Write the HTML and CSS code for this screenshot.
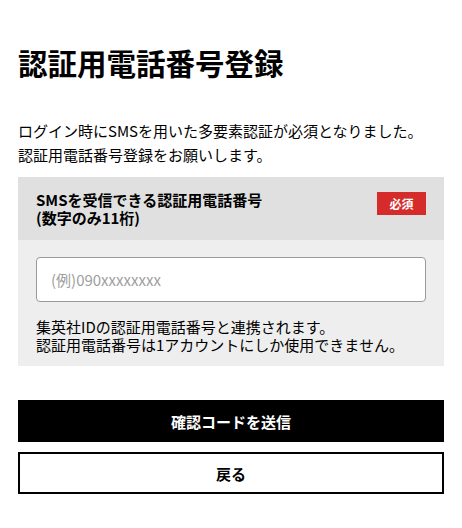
FILE: index.html
```html
<!DOCTYPE html>
<html lang="ja">
<head>
<meta charset="utf-8">
<title>認証用電話番号登録</title>
<link rel="stylesheet" href="styles.css">
</head>
<body>
<main class="page">
  <h1 class="title">認証用電話番号登録</h1>
  <p class="lead">ログイン時にSMSを用いた多要素認証が必須となりました。<br>認証用電話番号登録をお願いします。</p>
  <section class="field">
    <div class="field-head">
      <label class="field-label" for="tel">SMSを受信できる認証用電話番号<br>(数字のみ11桁)</label>
      <span class="badge">必須</span>
    </div>
    <div class="field-body">
      <input class="input" id="tel" type="tel" placeholder="(例)090xxxxxxxx">
      <p class="note">集英社IDの認証用電話番号と連携されます。<br>認証用電話番号は1アカウントにしか使用できません。</p>
    </div>
  </section>
  <div class="actions">
    <button class="btn btn-primary" type="button">確認コードを送信</button>
    <button class="btn btn-secondary" type="button">戻る</button>
  </div>
</main>
</body>
</html>
```
FILE: styles.css
```css
* { box-sizing: border-box; }
body {
  margin: 0;
  background: #fff;
  color: #000;
  font-family: "Noto Sans CJK JP", "Noto Sans", sans-serif;
}
.page {
  padding: 42px 18px 0;
}
.title {
  margin: 0;
  font-size: 29.5px;
  line-height: 40px;
  font-weight: 700;
}
.lead {
  margin: 37px 0 0;
  font-size: 15px;
  line-height: 24px;
}
.field {
  margin-top: 10px;
}
.field-head {
  display: flex;
  justify-content: space-between;
  align-items: flex-start;
  background: #e0e0e0;
  padding: 14px 18px 12px;
  height: 63px;
}
.field-label {
  font-size: 15px;
  line-height: 18px;
  font-weight: 700;
}
.badge {
  margin-top: 1px;
  background: #d52b2b;
  color: #fff;
  font-size: 12px;
  font-weight: 700;
  width: 49px;
  height: 23px;
  line-height: 23px;
  text-align: center;
}
.field-body {
  background: #eeeeee;
  padding: 17px 18px 12px;
}
.input {
  display: block;
  width: 100%;
  height: 45px;
  border: 1px solid #9a9a9a;
  border-radius: 4px;
  background: #fff;
  padding: 0 14px;
  font-family: inherit;
  font-size: 15px;
  color: #000;
  outline: none;
}
.input::placeholder {
  color: #9e9e9e;
}
.note {
  margin: 16px 0 0;
  font-size: 15px;
  line-height: 18px;
}
.actions {
  margin-top: 34px;
  display: flex;
  flex-direction: column;
  gap: 10px;
}
.btn {
  display: block;
  width: 100%;
  height: 42px;
  font-family: inherit;
  font-size: 15px;
  font-weight: 700;
  border: 2px solid #000;
  cursor: pointer;
}
.btn-primary {
  background: #000;
  color: #fff;
}
.btn-secondary {
  background: #fff;
  color: #000;
}
```
